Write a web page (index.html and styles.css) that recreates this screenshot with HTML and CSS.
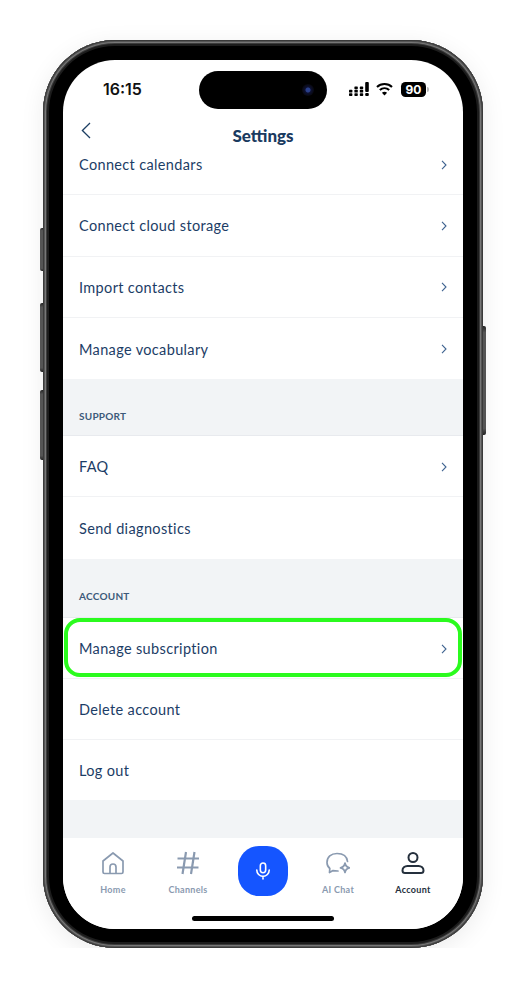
FILE: index.html
```html
<!DOCTYPE html>
<html lang="en">
<head>
    <meta charset="UTF-8">
    <meta name="viewport" content="width=device-width, initial-scale=1.0">
    <title>Settings</title>
    <link rel="stylesheet" href="styles.css">
</head>
<body>
    <div class="phone">
        <span class="side-btn side-mute"></span>
        <span class="side-btn side-up"></span>
        <span class="side-btn side-down"></span>
        <span class="side-btn side-power"></span>

        <div class="screen">
            <div class="island"><span class="camera"></span></div>

            <div class="status-bar">
                <span class="time">16:15</span>
                <div class="status-icons">
                    <svg width="20" height="14" viewBox="0 0 20 14" fill="#000">
                        <rect x="0" y="7.800" width="3.400" height="2.800" rx=".7"/>
                        <rect x="0" y="11.200" width="3.400" height="2.800" rx=".7"/>
                        <rect x="5.400" y="4.400" width="3.400" height="2.800" rx=".7"/>
                        <rect x="5.400" y="7.800" width="3.400" height="2.800" rx=".7"/>
                        <rect x="5.400" y="11.200" width="3.400" height="2.800" rx=".7"/>
                        <rect x="10.800" y="4.400" width="3.400" height="2.800" rx=".7"/>
                        <rect x="10.800" y="7.800" width="3.400" height="2.800" rx=".7"/>
                        <rect x="10.800" y="11.200" width="3.400" height="2.800" rx=".7"/>
                        <rect x="16.200" y="0" width="3.600" height="10" rx="1"/>
                        <rect x="16.200" y="11" width="3.600" height="3" rx="1"/>
                    </svg>
                    <svg class="wifi" width="17" height="14" viewBox="0 0 17 14" fill="none" stroke="#000" stroke-width="2">
                        <path d="M1 5 C5 1 12 1 16 5"/>
                        <path d="M3.800 8 C6.500 5.600 10.500 5.600 13.200 8"/>
                        <path d="M8.500 13.400 L5.900 10.700 C7.500 9.500 9.500 9.500 11.100 10.700 Z" fill="#000" stroke="none"/>
                    </svg>
                    <div class="battery"><span class="battery-level">90</span><span class="battery-tip"></span></div>
                </div>
            </div>

            <header class="nav-bar">
                <button class="back-btn">
                    <svg width="10" height="17" viewBox="0 0 10 17" fill="none" stroke="#1d3f63" stroke-width="1.300">
                        <path d="M9 1 L1.400 8.500 L9 16"/>
                    </svg>
                </button>
                <h1>Settings</h1>
            </header>

            <div class="content">
                <div class="scroll">
                    <div class="group">
                        <div class="row">Connect calendars<svg class="chevron" viewBox="0 0 6 10"><path d="M1 .8 L5 5 L1 9.200"/></svg></div>
                        <div class="row">Connect cloud storage<svg class="chevron" viewBox="0 0 6 10"><path d="M1 .8 L5 5 L1 9.200"/></svg></div>
                        <div class="row">Import contacts<svg class="chevron" viewBox="0 0 6 10"><path d="M1 .8 L5 5 L1 9.200"/></svg></div>
                        <div class="row">Manage vocabulary<svg class="chevron" viewBox="0 0 6 10"><path d="M1 .8 L5 5 L1 9.200"/></svg></div>
                    </div>

                    <div class="section-title">SUPPORT</div>
                    <div class="group">
                        <div class="row">FAQ<svg class="chevron" viewBox="0 0 6 10"><path d="M1 .8 L5 5 L1 9.200"/></svg></div>
                        <div class="row">Send diagnostics</div>
                    </div>

                    <div class="section-title section-account">ACCOUNT</div>
                    <div class="group group-account">
                        <div class="row">
                            Manage subscription<svg class="chevron" viewBox="0 0 6 10"><path d="M1 .8 L5 5 L1 9.200"/></svg>
                            <span class="highlight"></span>
                        </div>
                        <div class="row">Delete account</div>
                        <div class="row">Log out</div>
                    </div>
                </div>
            </div>

            <nav class="tab-bar">
                <div class="tab">
                    <svg width="24" height="24" viewBox="0 0 24 24" fill="none" stroke="#8a9ab0" stroke-width="1.700" stroke-linejoin="round">
                        <path d="M2 10 L12 2 L22 10 V21 a1.500 1.500 0 0 1 -1.500 1.500 H3.500 A1.500 1.500 0 0 1 2 21 Z"/>
                        <path d="M9 22.500 V16 a3 3 0 0 1 6 0 V22.500"/>
                    </svg>
                    <span>Home</span>
                </div>
                <div class="tab">
                    <svg width="24" height="24" viewBox="0 0 24 24" fill="none" stroke="#8a9ab0" stroke-width="2.200">
                        <path d="M10 1 L6.500 23 M18.500 1 L15 23 M1.500 7.500 H23 M1 16.500 H22.500"/>
                    </svg>
                    <span>Channels</span>
                </div>
                <div class="tab">
                    <div class="mic-btn">
                        <svg width="16" height="18" viewBox="0 0 18 20" fill="none" stroke="#fff" stroke-width="1.800" stroke-linecap="round">
                            <rect x="6" y="1" width="6" height="11" rx="3"/>
                            <path d="M2 9 a7 7 0 0 0 14 0 M9 16 V19"/>
                        </svg>
                    </div>
                </div>
                <div class="tab">
                    <svg width="24" height="24" viewBox="0 0 24 24" fill="none" stroke="#8a9ab0" stroke-width="1.700" stroke-linejoin="round" stroke-linecap="round">
                        <path d="M12 20 C10 20 8.500 20 7 19.600 L3.500 21.500 L3.800 17.500 C2 16 1 14 1 11.500 C1 6 5 2.500 11 2.500 C17 2.500 21 5.500 21.500 10.500"/>
                        <path d="M19 12 C19.500 15 20.500 16.200 23.500 16.800 C20.500 17.400 19.500 18.600 19 21.500 C18.500 18.600 17.500 17.400 14.500 16.800 C17.500 16.200 18.500 15 19 12 Z"/>
                    </svg>
                    <span>AI Chat</span>
                </div>
                <div class="tab tab-active">
                    <svg width="24" height="24" viewBox="0 0 24 24" fill="none" stroke="#25303d" stroke-width="2">
                        <circle cx="12" cy="6.500" r="4.500"/>
                        <path d="M6.500 15 H17.500 C20.500 15 22.500 17 22.500 19.500 C22.500 21 21.500 22 20 22 H4 C2.500 22 1.500 21 1.500 19.500 C1.500 17 3.500 15 6.500 15 Z"/>
                    </svg>
                    <span>Account</span>
                </div>
            </nav>

            <div class="home-bar"></div>
        </div>
    </div>
</body>
</html>
```

FILE: styles.css
```css
body {
    margin: 0;
    padding: 40px 0 0 43px;
    background: #fff;
    font-family: "Lato", "Noto Sans", sans-serif;
    color: #1c3d66;
}

.phone {
    position: relative;
    width: 440px;
    height: 908px;
    padding: 20px 20px 19px;
    box-sizing: border-box;
    border-radius: 72px;
    background: #000;
    box-shadow: inset 0 0 0 1px #3a3a3a, inset 0 0 0 2px #555, inset 0 0 0 3px #777, inset 0 0 0 4px #3c3c3c, inset 0 0 0 6px #1c1c1c, 0 5px 24px rgba(0, 0, 0, 0.08);
}

.side-btn {
    position: absolute;
    width: 3px;
    background: linear-gradient(#222, #555 6%, #555 94%, #222);
}

.side-mute { left: -3px; top: 188px; height: 43px; border-radius: 2px 0 0 2px; }
.side-up { left: -3px; top: 263px; height: 69px; border-radius: 2px 0 0 2px; }
.side-down { left: -3px; top: 350px; height: 70px; border-radius: 2px 0 0 2px; }
.side-power { right: -3px; top: 286px; height: 109px; border-radius: 0 2px 2px 0; }

.screen {
    position: relative;
    display: flex;
    flex-direction: column;
    height: 100%;
    border-radius: 52px;
    background: #fff;
    overflow: hidden;
}

.island {
    position: absolute;
    left: 136px;
    top: 11px;
    width: 128px;
    height: 38px;
    border-radius: 19px;
    background: #000;
}

.camera {
    position: absolute;
    right: 13px;
    top: 13px;
    width: 12px;
    height: 12px;
    border-radius: 50%;
    background: radial-gradient(circle, #2a3f8a 0 2px, #0c1030 3px, #08080f 6px);
}

.status-bar {
    display: flex;
    justify-content: space-between;
    align-items: center;
    height: 58px;
    padding: 0 34px 0 40px;
}

.time {
    font-family: "Inter", sans-serif;
    font-size: 16px;
    font-weight: 600;
    color: #111;
}

.status-icons {
    display: flex;
    align-items: center;
    gap: 7px;
}

.battery {
    display: flex;
    align-items: center;
    gap: 1px;
    margin-left: 1px;
}

.battery-level {
    width: 25px;
    height: 15px;
    border-radius: 4.500px;
    background: #000;
    color: #fff;
    font-family: "Inter", sans-serif;
    font-size: 12px;
    font-weight: 700;
    line-height: 15px;
    text-align: center;
}

.battery-tip {
    width: 2px;
    height: 5px;
    border-radius: 0 2px 2px 0;
    background: #bbb;
}

.nav-bar {
    position: relative;
    display: flex;
    justify-content: center;
    align-items: center;
    height: 32px;
}

.nav-bar h1 {
    margin: 0;
    font-size: 17px;
    font-weight: 900;
    color: #1a3a60;
    transform: translateY(1px);
}

.back-btn {
    position: absolute;
    left: 18px;
    top: 4px;
    padding: 0;
    border: none;
    background: none;
}

.content {
    flex: 1;
    overflow: hidden;
    background: #f2f4f6;
}

.scroll {
    margin-top: -16px;
}

.group {
    background: #fff;
}

.row {
    position: relative;
    display: flex;
    justify-content: space-between;
    align-items: center;
    height: 61.300px;
    padding: 1px 16px 0;
    box-sizing: border-box;
    border-bottom: 1px solid #f1f2f4;
    font-size: 14.500px;
    letter-spacing: 0.350px;
}

.group .row:last-child {
    border-bottom: none;
}

.group-account .row {
    height: 60.700px;
}

.chevron {
    width: 6px;
    height: 10px;
    fill: none;
    stroke: #3f6390;
    stroke-width: 1.100;
}

.highlight {
    position: absolute;
    left: 1px;
    right: 1px;
    top: 0;
    bottom: 1px;
    border: 4px solid #2bfb1e;
    border-radius: 16px;
}

.section-title {
    height: 57px;
    padding: 31px 16px 0;
    box-sizing: border-box;
    border-bottom: 1px solid #e8eaee;
    font-size: 10px;
    font-weight: 700;
    letter-spacing: 0.250px;
    color: #3d5a7a;
}

.section-account {
    height: 59.400px;
}

.tab-bar {
    display: flex;
    height: 91px;
    padding: 8px 12.500px 0;
    box-sizing: border-box;
    background: #fff;
}

.tab {
    display: flex;
    flex: 1;
    flex-direction: column;
    align-items: center;
    gap: 9px;
    padding-top: 5px;
    font-size: 9px;
    font-weight: 700;
    letter-spacing: 0.300px;
    color: #8a9ab0;
}

.tab-active {
    color: #25303d;
}

.mic-btn {
    display: flex;
    justify-content: center;
    align-items: center;
    width: 50px;
    height: 50px;
    margin-top: -5px;
    border-radius: 21px;
    background: #1555ff;
}

.home-bar {
    position: absolute;
    left: 129px;
    bottom: 8px;
    width: 142px;
    height: 5px;
    border-radius: 3px;
    background: #000;
}
```
